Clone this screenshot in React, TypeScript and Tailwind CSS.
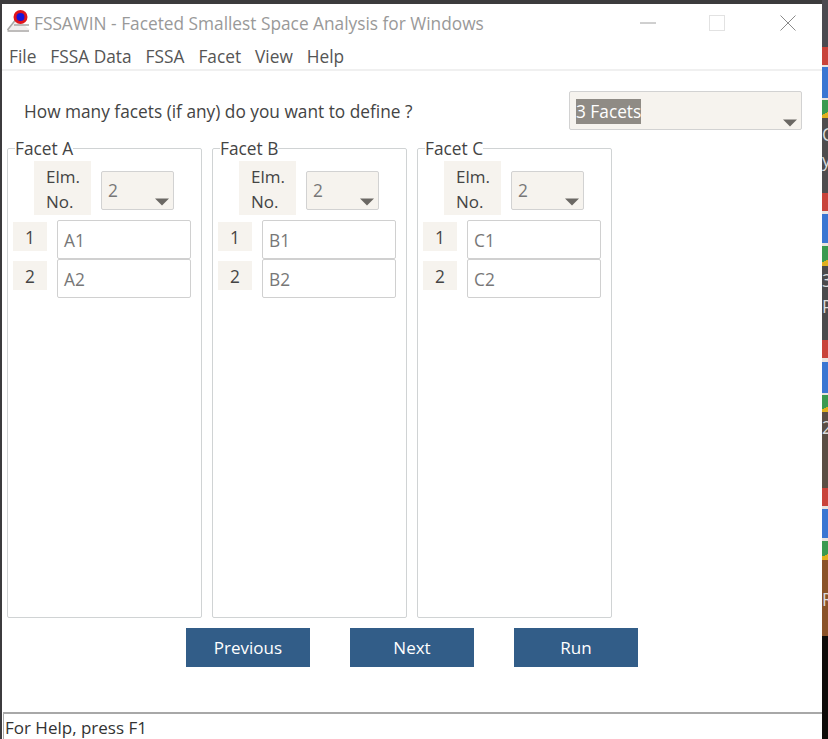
const FONT = "font-['Open_Sans','Noto_Sans',sans-serif]";
const GREEN = 'bg-[linear-gradient(155deg,#3a9a50_72%,#e0b020_72%)]';

// desktop showing behind the window, right edge
const STRIP = [
  { h: 47, c: 'bg-[#4b4a50]' },
  { h: 18, c: 'bg-[#c9433a]' },
  { h: 2, c: 'bg-[#e8e4e0]' },
  { h: 31, c: 'bg-[#3a76d2]' },
  { h: 2, c: 'bg-[#e8e4e0]' },
  { h: 18, c: GREEN },
  { h: 75, c: 'bg-[#4e4c4e] pt-[4px]', t: 'C', y: 'y' },
  { h: 18, c: 'bg-[#c9433a]' },
  { h: 3, c: 'bg-[#e8e4e0]' },
  { h: 29, c: 'bg-[#3a76d2]' },
  { h: 3, c: 'bg-[#e8e4e0]' },
  { h: 20, c: GREEN },
  { h: 74, c: 'bg-[#4b4a4c] pt-[2px]', t: '3', y: 'P' },
  { h: 18, c: 'bg-[#c9433a]' },
  { h: 4, c: 'bg-[#e8e4e0]' },
  { h: 31, c: 'bg-[#3a76d2]' },
  { h: 2, c: 'bg-[#e8e4e0]' },
  { h: 17, c: GREEN },
  { h: 76, c: 'bg-[#5a4e44] pt-[3px]', t: '2' },
  { h: 18, c: 'bg-[#c9433a]' },
  { h: 3, c: 'bg-[#e8e4e0]' },
  { h: 29, c: 'bg-[#3a76d2]' },
  { h: 3, c: 'bg-[#e8e4e0]' },
  { h: 19, c: GREEN },
  { h: 76, c: 'bg-[#8a5228] pt-[27px]', t: 'R' },
  { h: 103, c: 'bg-[#0e0b09]' },
];

function Caret() {
  return (
    <svg width="14" height="8" viewBox="0 0 14 8" className="block">
      <path d="M0 0.5 H14 L7 7.5 Z" fill="#6b6864" />
    </svg>
  );
}

function Combo({ value, className }: { value: string; className: string }) {
  return (
    <div className={`flex items-end justify-between bg-[#f6f3ee] border border-[#d2d2d2] rounded-[2px] ${className}`}>
      <span className="pl-[6px] pb-[6px] text-[17.3px] leading-[24px] text-[#777]">{value}</span>
      <span className="pr-[4px] pb-[3px]"><Caret /></span>
    </div>
  );
}

function Facet({ name, rows }: { name: string; rows: string[] }) {
  return (
    <fieldset className="w-[195px] h-[482px] border border-[#d0d3d4] rounded-[2px] pl-[5px] pr-[10px] -mt-[10px]">
      <legend className="ml-[2px] translate-y-[1px] text-[17.3px] leading-[24px] text-[#444]">{name}</legend>
      <div className="flex items-start pl-[21px] mt-[1px]">
        <div className="w-[57px] h-[54px] bg-[#f6f3ee] pl-[12px] pt-[3px] text-[17px] leading-[25px] text-[#444]">
          Elm.<br />No.
        </div>
        <Combo value="2" className="w-[73px] h-[39px] ml-[10px] mt-[10px]" />
      </div>
      <div className="flex flex-col mt-[5px]">
        {rows.map((r, i) => (
          <div key={r} className="flex items-start h-[39px]">
            <div className="w-[34px] h-[29px] mt-[2px] pt-[3px] bg-[#f6f3ee] text-center text-[17.3px] leading-[26px] text-[#444]">{i + 1}</div>
            <div className="w-[134px] h-[39px] ml-[10px] border border-[#d0d0d0] rounded-[2px] pl-[6px] pt-[6px] text-[17.3px] leading-[28px] text-[#777] bg-white">{r}</div>
          </div>
        ))}
      </div>
    </fieldset>
  );
}

function NavButton({ label }: { label: string }) {
  return (
    <button className="w-[124px] h-[39px] bg-[#325d88] text-white text-[17px] leading-[39px] text-center">{label}</button>
  );
}

export default function App() {
  return (
    <div className={`${FONT} w-[828px] h-[739px] overflow-hidden bg-[#3c3b3d] flex`}>
      <div className="w-[820px] ml-[2px] mt-[4px] h-[735px] bg-white flex flex-col">
        {/* title bar */}
        <div className="h-[38px] flex items-center shrink-0">
          <svg width="26" height="26" viewBox="0 0 26 26" className="ml-[4px] shrink-0">
            <path d="M2 20 L11 9 L24 20 Z" fill="#f1eeee" />
            <path d="M1.5 20 L11 8 M1.5 21 H23 M8 15 L23 15" stroke="#a9a7a5" strokeWidth="1.6" fill="none" />
            <circle cx="14.5" cy="7" r="7" fill="#e0141c" />
            <circle cx="14.5" cy="7" r="4" fill="#1a14d8" />
          </svg>
          <span className="ml-[2px] pt-[2px] text-[17.3px] text-[#999] whitespace-nowrap">FSSAWIN - Faceted Smallest Space Analysis for Windows</span>
          <div className="flex-1" />
          <svg width="16" height="2" viewBox="0 0 16 2" className="mr-[53px]"><path d="M0 1 H16" stroke="#a0a0a0" /></svg>
          <div className="w-[16px] h-[16px] border border-[#e2e2e2] mr-[55px]" />
          <svg width="16" height="16" viewBox="0 0 16 16" className="mr-[26px]"><path d="M0.5 0.5 L15.5 15.5 M15.5 0.5 L0.5 15.5" stroke="#8a8a8a" /></svg>
        </div>
        {/* menu */}
        <div className="h-[29px] flex items-center gap-[14px] pl-[7px] pt-[2px] border-b-2 border-[#f0f0f0] text-[17.3px] text-[#555] shrink-0">
          <span>File</span>
          <span>FSSA Data</span>
          <span>FSSA</span>
          <span>Facet</span>
          <span>View</span>
          <span>Help</span>
        </div>
        {/* question */}
        <div className="flex items-start pt-[20px] pl-[22px] shrink-0">
          <span className="w-[545px] mt-[8px] text-[17.3px] leading-[26px] text-[#444]">How many facets (if any) do you want to define ?</span>
          <div className="w-[233px] h-[39px] flex items-end justify-between bg-[#f6f3ee] border border-[#d2d2d2] rounded-[2px]">
            <span className="ml-[6px] mb-[5px] text-[17.3px] leading-[25px] bg-[#8f8b85] text-white">3 Facets</span>
            <span className="pr-[4px] pb-[2px]"><Caret /></span>
          </div>
        </div>
        {/* facets */}
        <div className="flex gap-[10px] pl-[5px] mt-[16px] shrink-0">
          <Facet name="Facet A" rows={['A1', 'A2']} />
          <Facet name="Facet B" rows={['B1', 'B2']} />
          <Facet name="Facet C" rows={['C1', 'C2']} />
        </div>
        {/* nav */}
        <div className="flex gap-[40px] pl-[184px] mt-[10px] shrink-0">
          <NavButton label="Previous" />
          <NavButton label="Next" />
          <NavButton label="Run" />
        </div>
        <div className="flex-1" />
        {/* status bar */}
        <div className="h-[27px] ml-[1px] border-t-2 border-l border-[#a8a8a8] text-[17px] leading-[28px] text-[#333] pl-[1px] shrink-0">For Help, press F1</div>
      </div>
      <div className="w-[6px] flex flex-col shrink-0 overflow-hidden text-[#ddd] text-[17.3px]">
        {STRIP.map((s, i) => (
          <div key={i} className={`${s.c} shrink-0 overflow-hidden leading-[26px] flex flex-col`} style={{ height: s.h }}>
            {s.t ? <span>{s.t}</span> : null}
            {s.y ? <span>{s.y}</span> : null}
          </div>
        ))}
      </div>
    </div>
  );
}
